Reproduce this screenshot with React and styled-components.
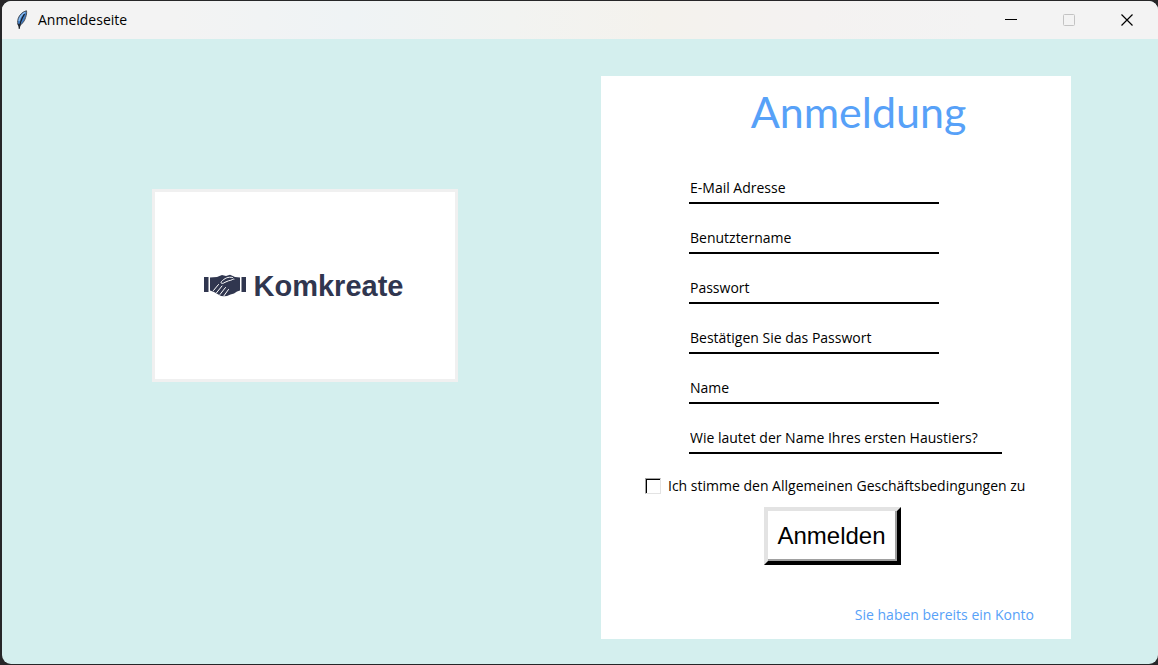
import React from "react";
import styled, { createGlobalStyle } from "styled-components";

const uiFont = '"Open Sans", "Noto Sans", sans-serif';

const GlobalStyle = createGlobalStyle`
  *, *::before, *::after { box-sizing: border-box; }
  html, body, #root { height: 100%; }
  body {
    margin: 0;
    background: #262628;
    color: #000;
    font-family: ${uiFont};
  }
`;

const Desktop = styled.div`
  display: flex;
  min-height: 100%;
  padding: 1px 0 1px 2px;
`;

const Window = styled.div`
  flex: 1;
  display: flex;
  flex-direction: column;
  overflow: hidden;
  border-radius: 9px;
  background: #d4efee;
`;

const TitleBar = styled.header`
  display: flex;
  align-items: center;
  height: 38px;
  padding-left: 13px;
  gap: 9px;
  background: linear-gradient(90deg, #f3f3f3 15%, #eff3f5 30%, #f2f3f1 44%, #f4f2ed 57%, #f4f2f1 70%, #f3f3f3 85%);
`;

const WindowTitle = styled.span`
  flex: 1;
  font-size: 14px;
  line-height: 20px;
`;

const WindowControls = styled.div`
  display: flex;
  height: 100%;
  padding-right: 2px;
`;

const ControlButton = styled.button`
  display: grid;
  place-items: center;
  width: 58px;
  border: 0;
  padding: 0;
  background: transparent;
  color: ${(p) => (p.disabled ? "#c3c3c3" : "#000")};
`;

const Content = styled.main`
  flex: 1;
  display: flex;
  align-items: flex-start;
  justify-content: space-between;
  padding: 37px 87px 25px 150px;
`;

const LogoPanel = styled.section`
  display: flex;
  align-items: center;
  justify-content: center;
  gap: 8px;
  width: 306px;
  height: 193px;
  margin-top: 113px;
  padding-right: 3px;
  border: 3px solid #f0f0f0;
  background: #fff;
  color: #30364f;
`;

const LogoName = styled.span`
  font-family: "Liberation Sans", Arial, sans-serif;
  font-size: 29px;
  font-weight: 700;
  line-height: 32px;
`;

const Form = styled.form`
  display: flex;
  flex-direction: column;
  width: 470px;
  padding: 12px 37px 14px 44px;
  background: #fff;
`;

const Heading = styled.h1`
  margin: 0 0 38px;
  padding-left: 38px;
  color: #57a1f8;
  font-family: Lato, sans-serif;
  font-size: 43px;
  font-weight: 400;
  line-height: 48px;
  text-align: center;
`;

const Fields = styled.div`
  display: flex;
  flex-direction: column;
  gap: 20px;
  padding-left: 44px;
`;

const Field = styled.input`
  width: ${(p) => (p.$wide ? 313 : 250)}px;
  height: 30px;
  padding: 0 1px 2px;
  border: 0;
  border-bottom: 2px solid #000;
  border-radius: 0;
  outline: 0;
  background: #fff;
  font-family: ${uiFont};
  font-size: 14px;

  &::placeholder {
    color: #000;
    opacity: 1;
  }
`;

const Terms = styled.label`
  display: flex;
  align-items: center;
  gap: 7px;
  margin-top: 22px;
  font-size: 14px;
  line-height: 20px;
  white-space: nowrap;
`;

const Checkbox = styled.input`
  appearance: none;
  flex: none;
  width: 16px;
  height: 16px;
  margin: 0;
  border: 1px solid;
  border-color: #a0a0a0 #e3e3e3 #e3e3e3 #a0a0a0;
  background: #fff;
  box-shadow: inset 1px 1px #000;

  &:checked {
    background: #000;
  }
`;

const SubmitButton = styled.button`
  align-self: center;
  width: 137px;
  height: 58px;
  margin-top: 11px;
  margin-right: 14px;
  padding: 0 2px 0 0;
  border: 4px solid;
  border-color: #e3e3e3 #000 #000 #e3e3e3;
  background: #fff;
  box-shadow: inset -2px -2px #a0a0a0;
  color: #000;
  font-family: "Liberation Sans", Arial, sans-serif;
  font-size: 24px;
`;

const LoginLink = styled.a`
  align-self: flex-end;
  margin-top: 40px;
  color: #57a1f8;
  font-size: 14px;
  line-height: 20px;
  text-decoration: none;
`;

const fields = [
  { label: "E-Mail Adresse", type: "email" },
  { label: "Benutztername", type: "text" },
  { label: "Passwort", type: "password" },
  { label: "Bestätigen Sie das Passwort", type: "password" },
  { label: "Name", type: "text" },
  { label: "Wie lautet der Name Ihres ersten Haustiers?", type: "text", wide: true },
];

function FeatherIcon() {
  return (
    <svg width="14" height="20" viewBox="0 0 14 20" aria-hidden="true">
      <path d="M11.5 .8C8 1.5 4.500 4.500 3.200 8.500 2.300 11.500 2.400 14 3.600 15.800 7 14.500 9.500 11.500 10.600 7.500 11.400 5 11.900 2.800 11.500 .8Z" fill="#3f7cc4" stroke="#4a5058" strokeWidth="1" />
      <path d="M10.200 2.200C7 4 4.800 7 4 11" fill="none" stroke="#8fc0f2" strokeWidth="1.300" />
      <path d="M9.500 4C7 8 4.800 12 4.200 18.800" fill="none" stroke="#15191f" strokeWidth="1.200" />
      <path d="M2.600 13.500 4.200 19 5.700 14.700Z" fill="#20262e" />
    </svg>
  );
}

function HandshakeIcon() {
  return (
    <svg width="42" height="23" viewBox="0 0 42 23" aria-hidden="true">
      <path d="M0 3H4.500V18H0ZM37.500 3H42V18H37.500Z" fill="currentColor" />
      <path d="M6 3.500 13 3 18 1 22 2 26 .8 31 3 36 3.500V16.500L33 17.500 30 19.500 26.500 20.500 23 22 20 22.300 17 22 10 18 6 16.500Z" fill="currentColor" />
      <g fill="none" stroke="#fff" strokeWidth="1" strokeLinecap="round" strokeLinejoin="round">
        <path d="M28.500 3.500C24 2.300 20.500 4.500 17.500 7.500 16 9.500 18.500 10.200 21 8.300L24.500 6.800C28 6.500 29 4.500 30 5" />
        <path d="M14.500 10.500 9.500 16.500M18 12 12.500 18.800M21.500 13.500 16 20.500M24.500 15.500 20 21.700" />
      </g>
    </svg>
  );
}

export default function App() {
  return (
    <>
      <GlobalStyle />
      <Desktop>
        <Window>
          <TitleBar>
            <FeatherIcon />
            <WindowTitle>Anmeldeseite</WindowTitle>
            <WindowControls>
              <ControlButton type="button" aria-label="Minimieren">
                <svg width="12" height="12" shapeRendering="crispEdges"><path d="M0 5.500H12" stroke="currentColor" /></svg>
              </ControlButton>
              <ControlButton type="button" aria-label="Maximieren" disabled>
                <svg width="12" height="12"><rect x=".5" y=".5" width="11" height="11" rx="1" fill="none" stroke="currentColor" /></svg>
              </ControlButton>
              <ControlButton type="button" aria-label="Schließen">
                <svg width="12" height="12"><path d="M.5 .5 11.500 11.500M11.500 .5 .5 11.500" stroke="currentColor" strokeWidth="1.200" /></svg>
              </ControlButton>
            </WindowControls>
          </TitleBar>
          <Content>
            <LogoPanel>
              <HandshakeIcon />
              <LogoName>Komkreate</LogoName>
            </LogoPanel>
            <Form onSubmit={(e) => e.preventDefault()}>
              <Heading>Anmeldung</Heading>
              <Fields>
                {fields.map((f) => (
                  <Field key={f.label} type={f.type} placeholder={f.label} aria-label={f.label} $wide={f.wide} />
                ))}
              </Fields>
              <Terms>
                <Checkbox type="checkbox" />
                Ich stimme den Allgemeinen Geschäftsbedingungen zu
              </Terms>
              <SubmitButton type="submit">Anmelden</SubmitButton>
              <LoginLink href="#login">Sie haben bereits ein Konto</LoginLink>
            </Form>
          </Content>
        </Window>
      </Desktop>
    </>
  );
}
